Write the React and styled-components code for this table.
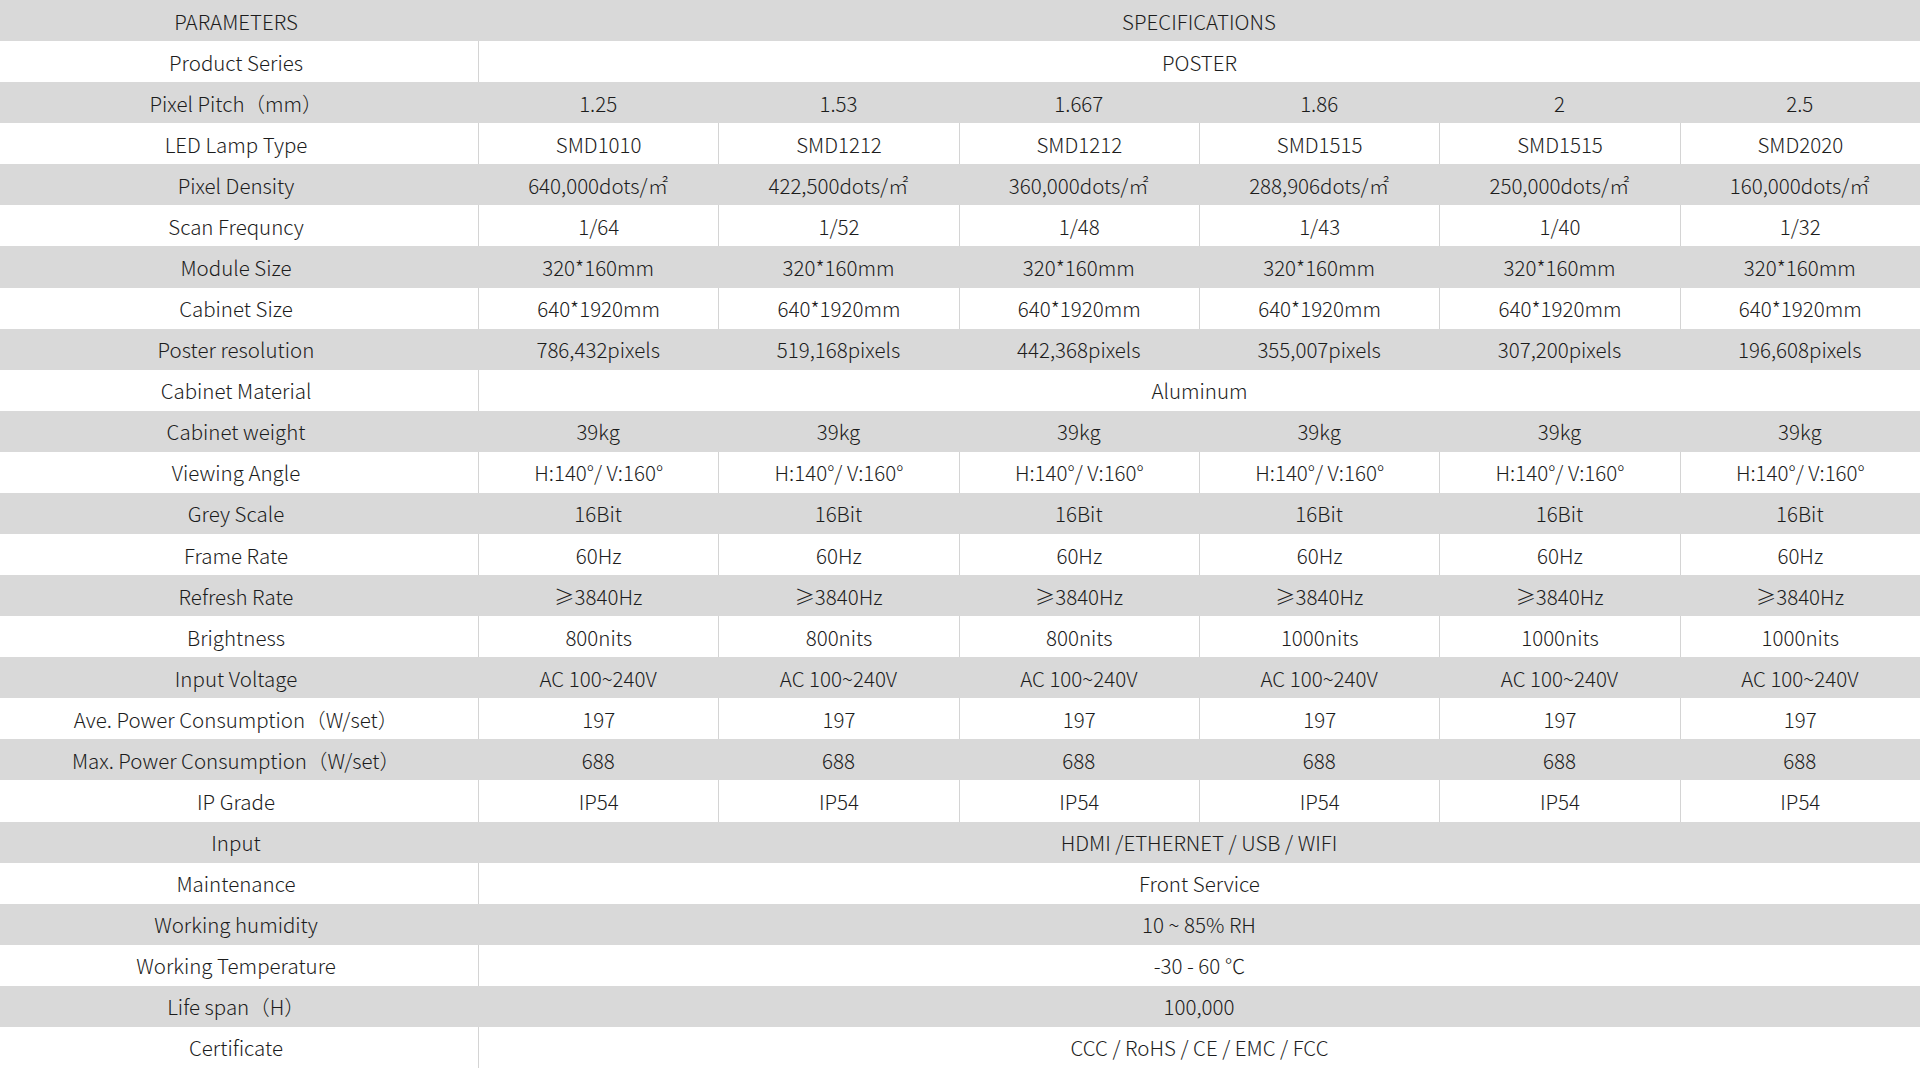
import React from 'react';
import styled, { createGlobalStyle } from 'styled-components';

const GlobalStyle = createGlobalStyle`
  html, body {
    margin: 0;
    padding: 0;
    background: #ffffff;
  }
  body {
    font-family: "Noto Sans CJK SC", "Noto Sans", sans-serif;
    color: #1c1c1c;
  }
`;

const Table = styled.div`
  display: grid;
  grid-template-rows: repeat(26, 1fr);
  width: 1920px;
  height: 1068px;
  overflow: hidden;
`;

const Row = styled.div`
  display: grid;
  grid-template-columns: 478px repeat(6, 1fr);
  background: ${props => (props.shaded ? '#d9d9d9' : '#ffffff')};
`;

const Cell = styled.div`
  display: flex;
  align-items: center;
  justify-content: center;
  font-size: 20.5px;
  font-weight: 300;
  white-space: nowrap;
  grid-column: ${props => (props.span ? '2 / -1' : 'auto')};
  border-left: ${props => (props.divided ? '1px solid #d4d4d4' : 'none')};
`;

const LabelCell = styled(Cell)`
  padding-right: 6px;
`;

const rows = [
  ['PARAMETERS', 'SPECIFICATIONS'],
  ['Product Series', 'POSTER'],
  ['Pixel Pitch（mm）', ['1.25', '1.53', '1.667', '1.86', '2', '2.5']],
  ['LED Lamp Type', ['SMD1010', 'SMD1212', 'SMD1212', 'SMD1515', 'SMD1515', 'SMD2020']],
  ['Pixel Density', ['640,000dots/㎡', '422,500dots/㎡', '360,000dots/㎡', '288,906dots/㎡', '250,000dots/㎡', '160,000dots/㎡']],
  ['Scan Frequncy', ['1/64', '1/52', '1/48', '1/43', '1/40', '1/32']],
  ['Module Size', Array(6).fill('320*160mm')],
  ['Cabinet Size', Array(6).fill('640*1920mm')],
  ['Poster resolution', ['786,432pixels', '519,168pixels', '442,368pixels', '355,007pixels', '307,200pixels', '196,608pixels']],
  ['Cabinet Material', 'Aluminum'],
  ['Cabinet weight', Array(6).fill('39kg')],
  ['Viewing Angle', Array(6).fill('H:140°/ V:160°')],
  ['Grey Scale', Array(6).fill('16Bit')],
  ['Frame Rate', Array(6).fill('60Hz')],
  ['Refresh Rate', Array(6).fill('≥3840Hz')],
  ['Brightness', ['800nits', '800nits', '800nits', '1000nits', '1000nits', '1000nits']],
  ['Input Voltage', Array(6).fill('AC 100~240V')],
  ['Ave. Power Consumption（W/set）', Array(6).fill('197')],
  ['Max. Power Consumption（W/set）', Array(6).fill('688')],
  ['IP Grade', Array(6).fill('IP54')],
  ['Input', 'HDMI /ETHERNET / USB / WIFI'],
  ['Maintenance', 'Front Service'],
  ['Working humidity', '10 ~ 85% RH'],
  ['Working Temperature', '-30 - 60 ℃'],
  ['Life span（H）', '100,000'],
  ['Certificate', 'CCC / RoHS / CE / EMC / FCC'],
];

export default function App() {
  return (
    <>
      <GlobalStyle />
      <Table>
        {rows.map(([label, value], i) => {
          const shaded = i % 2 === 0;
          return (
            <Row key={label} shaded={shaded}>
              <LabelCell>{label}</LabelCell>
              {Array.isArray(value) ? (
                value.map((v, j) => (
                  <Cell key={j} divided={!shaded}>
                    {v}
                  </Cell>
                ))
              ) : (
                <Cell span divided={!shaded}>
                  {value}
                </Cell>
              )}
            </Row>
          );
        })}
      </Table>
    </>
  );
}
